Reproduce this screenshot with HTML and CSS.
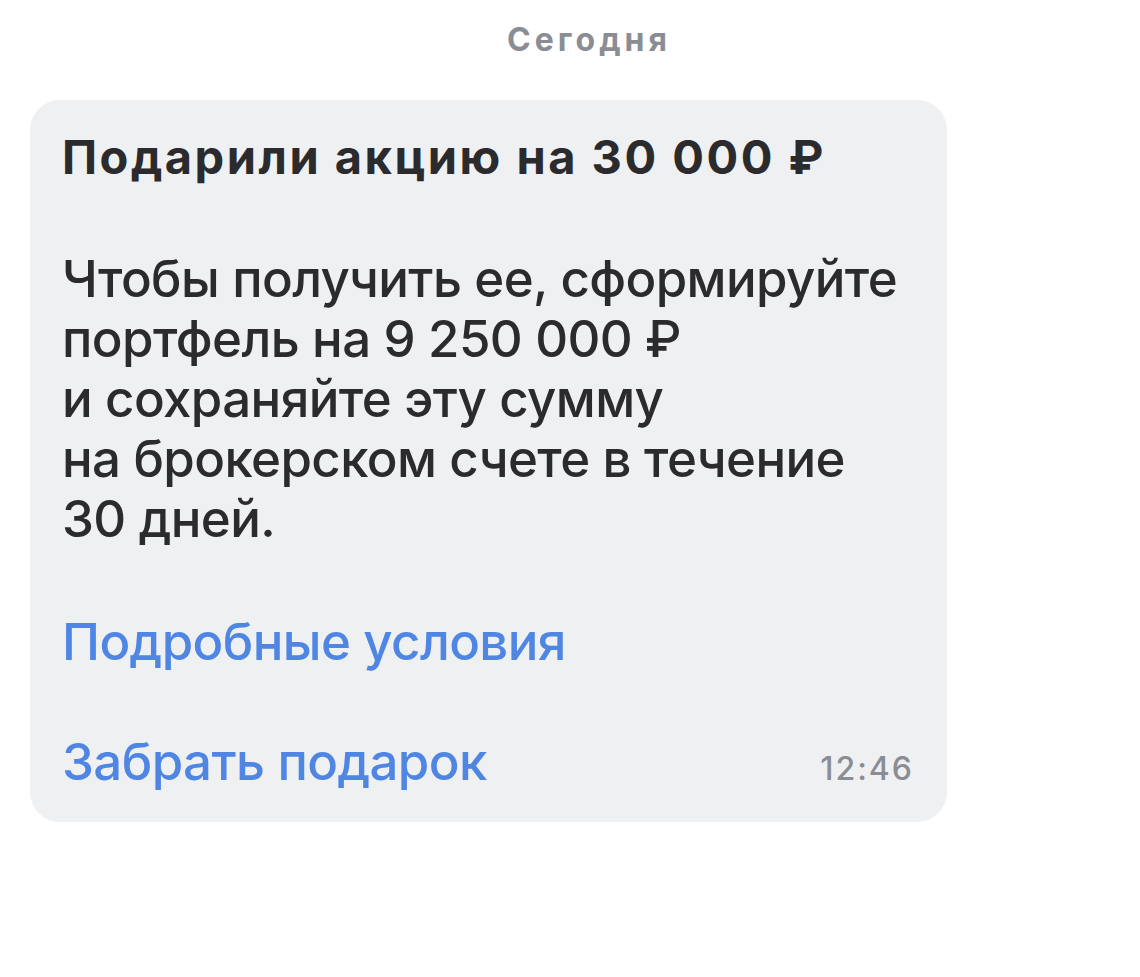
FILE: index.html
```html
<!DOCTYPE html>
<html lang="ru">
<head>
    <meta charset="UTF-8">
    <meta name="viewport" content="width=device-width, initial-scale=1.0">
    <title>Сообщение</title>
    <link rel="stylesheet" href="styles.css">
</head>
<body>
    <div class="chat">
        <div class="day">Сегодня</div>

        <div class="bubble">
            <div class="title">Подарили акцию на 30 000 ₽</div>
            <div class="text">
                Чтобы получить ее, сформируйте<br>
                портфель на 9 250 000 ₽<br>
                и сохраняйте эту сумму<br>
                на брокерском счете в течение<br>
                30 дней.
            </div>
            <a class="link" href="#">Подробные условия</a>
            <div class="last-row">
                <a class="link" href="#">Забрать подарок</a>
                <span class="time">12:46</span>
            </div>
        </div>
    </div>
</body>
</html>
```

FILE: styles.css
```css
body {
    margin: 0;
    background: #fff;
    font-family: Inter, "Noto Sans", sans-serif;
    color: #2b2b2d;
}

.chat {
    padding: 18px 0 0 30px;
    width: 917px;
}

.day {
    text-align: center;
    padding-left: 201px;
    font-size: 32px;
    font-weight: 700;
    line-height: 44px;
    letter-spacing: 4px;
    color: #8b8d94;
    margin-bottom: 38px;
}

.bubble {
    background: #eff0f2;
    border-radius: 30px;
    padding: 27px 33px 30px 32px;
}

.title {
    font-size: 47px;
    font-weight: 700;
    line-height: 60px;
    letter-spacing: 2.5px;
}

.text {
    margin-top: 62px;
    font-size: 51px;
    font-weight: 500;
    line-height: 60px;
    letter-spacing: -0.6px;
}

.link {
    display: block;
    margin-top: 63px;
    font-size: 51px;
    font-weight: 500;
    line-height: 60px;
    color: #4f86e3;
    text-decoration: none;
    letter-spacing: -0.6px;
}

.last-row {
    display: flex;
    justify-content: space-between;
    align-items: baseline;
}

.last-row .link {
    margin-top: 60px;
}

.time {
    font-size: 32px;
    letter-spacing: 2px;
    color: #8b8d94;
    font-weight: 500;
}
```
